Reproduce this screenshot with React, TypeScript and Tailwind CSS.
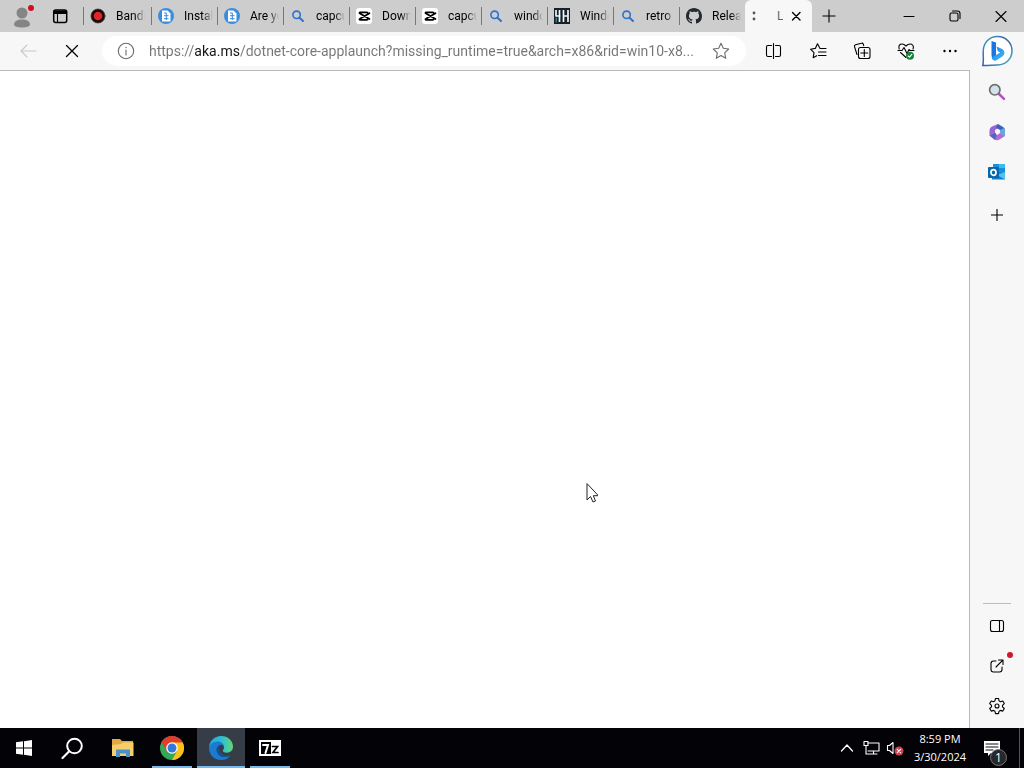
import type { ReactNode } from 'react';

type IconProps = { children: ReactNode; className?: string; box?: string };

function Icon({ children, className = 'size-4', box = '0 0 16 16' }: IconProps) {
  return (
    <svg viewBox={box} className={`shrink-0 ${className}`} fill="none" stroke="currentColor" strokeWidth="1.1" strokeLinecap="round" strokeLinejoin="round" aria-hidden="true">
      {children}
    </svg>
  );
}

const BandicamIcon = () => (
  <Icon>
    <circle cx="8" cy="8" r="7" fill="#160808" stroke="#4a3030" strokeWidth="0.8" />
    <circle cx="8" cy="8" r="4.3" fill="#e02428" stroke="none" />
  </Icon>
);

const DocIcon = () => (
  <Icon>
    <circle cx="8" cy="8" r="8" fill="#3a8ddd" stroke="none" />
    <path d="M4 2.500h5.500l3 3v8H4z" fill="#fff" stroke="none" />
    <path d="M6 5h2.500M6 7.700h4.500M6 10.700h4.500M8.300 5v7" stroke="#3a8ddd" strokeWidth="1" strokeLinecap="butt" />
  </Icon>
);

const SearchIcon = () => (
  <Icon>
    <circle cx="6.600" cy="6.800" r="3.700" stroke="#2a73cf" strokeWidth="1.600" />
    <path d="M9.500 9.700l3.500 3.300" stroke="#2a73cf" strokeWidth="2" />
  </Icon>
);

const CapcutIcon = () => (
  <Icon>
    <rect width="16" height="16" rx="3" fill="#fff" stroke="none" />
    <path d="M13.500 5.200L4 10.700c-1 .6-.6 1.100.2 1.100h6.600c.7 0 1-.3 1-.9v-.4M13.500 11L4 5.500c-1-.6-.6-1.100.2-1.100h6.600c.7 0 1 .3 1 .9v.4" stroke="#000" strokeWidth="1.700" />
  </Icon>
);

const FourHIcon = () => (
  <Icon>
    <rect width="16" height="16" fill="#14202b" stroke="none" />
    <path d="M2 2v6h4.500M5.500 2v12M9.500 2v12M14 2v12M9.500 8H14" stroke="#f3f5f7" strokeWidth="1.700" strokeLinecap="butt" />
    <path d="M2.200 10v4" stroke="#4da7b5" strokeWidth="1" />
  </Icon>
);

const GithubIcon = () => (
  <Icon>
    <path
      fill="#24292f"
      stroke="none"
      d="M8 0C3.580 0 0 3.580 0 8c0 3.540 2.290 6.530 5.470 7.590.4.070.55-.17.55-.38 0-.19-.010-.82-.010-1.490-2.010.37-2.530-.49-2.690-.94-.09-.23-.48-.94-.82-1.130-.28-.15-.68-.52-.010-.53.63-.010 1.080.58 1.230.82.72 1.210 1.870.87 2.330.66.070-.52.280-.87.510-1.070-1.780-.2-3.640-.89-3.640-3.950 0-.87.310-1.590.82-2.150-.08-.2-.36-1.020.08-2.120 0 0 .67-.21 2.200.82.640-.18 1.320-.27 2-.27s1.360.09 2 .27c1.530-1.040 2.200-.82 2.200-.82.44 1.100.16 1.920.08 2.120.51.560.82 1.270.82 2.150 0 3.070-1.870 3.750-3.650 3.950.29.25.54.73.54 1.480 0 1.070-.010 1.930-.010 2.200 0 .21.15.46.55.38A8.010 8.010 0 0 0 16 8c0-4.420-3.580-8-8-8z"
    />
  </Icon>
);

const tabs = [
  { label: 'Bandicam', icon: <BandicamIcon /> },
  { label: 'Install', icon: <DocIcon /> },
  { label: 'Are you', icon: <DocIcon /> },
  { label: 'capcut', icon: <SearchIcon /> },
  { label: 'Download', icon: <CapcutIcon /> },
  { label: 'capcut', icon: <CapcutIcon /> },
  { label: 'windows', icon: <SearchIcon /> },
  { label: 'Windows', icon: <FourHIcon /> },
  { label: 'retro', icon: <SearchIcon /> },
  { label: 'Releases', icon: <GithubIcon /> },
];

const fade = '[mask-image:linear-gradient(to_right,#000_65%,transparent)]';

function TitleBar() {
  return (
    <header className="flex h-8 shrink-0 bg-[#cdcdcd]">
      <div className="flex w-[83px] shrink-0 items-center pl-3">
        <button aria-label="Profile">
          <Icon className="h-6 w-6" box="0 0 24 24">
            <circle cx="10" cy="9" r="5.500" fill="#858585" stroke="none" />
            <path d="M2 20.500c0-3 3-5 8-5s8 2 8 5c0 2-3.500 3-8 3s-8-1-8-3z" fill="#858585" stroke="none" />
            <circle cx="19" cy="4" r="3" fill="#cf101e" stroke="none" />
          </Icon>
        </button>
        <button aria-label="Tab actions" className="ml-4">
          <Icon>
            <rect x="1.700" y="2" width="13" height="12.500" rx="2" strokeWidth="1.500" />
            <path d="M2 3h12.500v2.500H2z" fill="#000" />
            <path d="M5.500 5v9.500" />
          </Icon>
        </button>
      </div>
      <nav aria-label="Tabs" className="flex min-w-0">
        {tabs.map((tab, i) => (
          <button key={i} className="flex w-[66px] min-w-0 items-center first:w-[68px]">
            <span className="h-[18px] w-px shrink-0 bg-[#777777]" />
            <span className="ml-1.5 shrink-0">{tab.icon}</span>
            <span className={`ml-2.5 w-[29px] overflow-hidden text-left font-[Roboto,sans-serif] text-xs whitespace-nowrap ${fade}`}>{tab.label}</span>
          </button>
        ))}
        <div className="flex w-[67px] items-center rounded-t-md bg-[#f7f7f7] pl-1.5">
          <Icon className="h-4 w-2" box="0 0 8 16">
            <circle cx="3" cy="5" r="1.400" fill="#555" stroke="none" />
            <circle cx="3" cy="11" r="1.400" fill="#555" stroke="none" />
          </Icon>
          <span className="ml-[18px] w-1.5 overflow-hidden font-[Roboto,sans-serif] text-xs text-[#666666]">L</span>
          <button aria-label="Close tab" className="ml-[5px]">
            <Icon><path d="M4.500 4.500l7.500 7.500M12 4.500L4.500 12" strokeWidth="1.400" /></Icon>
          </button>
        </div>
      </nav>
      <button aria-label="New tab" className="ml-[9px]">
        <Icon><path d="M8 1.500v13M1.500 8h13" strokeLinecap="butt" /></Icon>
      </button>
      <div className="ml-auto flex">
        <button aria-label="Minimize" className="flex w-[46px] items-center justify-center"><Icon><path d="M3 8.500h10" /></Icon></button>
        <button aria-label="Restore" className="flex w-[46px] items-center justify-center">
          <Icon>
            <rect x="3" y="5" width="8" height="8" rx="1.500" />
            <path d="M5.500 3h5c1.700 0 2.500.8 2.500 2.500v5" />
          </Icon>
        </button>
        <button aria-label="Close" className="flex w-[46px] items-center justify-center"><Icon><path d="M3 3.500l10 10M13 3.500l-10 10" /></Icon></button>
      </div>
    </header>
  );
}

function BingIcon() {
  return (
    <svg viewBox="0 0 32 32" className="size-8" fill="none" aria-hidden="true">
      <defs>
        <linearGradient id="ring" x1="0" y1="0" x2="1" y2="1">
          <stop offset="0" stopColor="#4aa0bd" /><stop offset=".5" stopColor="#355ea8" /><stop offset="1" stopColor="#4fb8c4" />
        </linearGradient>
        <linearGradient id="bing" x1="0" y1="0" x2="1" y2="1">
          <stop offset="0" stopColor="#1683e6" /><stop offset=".5" stopColor="#2d9df0" /><stop offset="1" stopColor="#45c2e5" />
        </linearGradient>
      </defs>
      <path d="M1.800 30.500c.8-3 .6-7.500.4-12.500C1.800 8 8 1.500 16.500 1.500S31 8 31 15.800 25 30 16.500 30c-5 0-9 .7-14.700.5z" fill="#fff" stroke="url(#ring)" strokeWidth="1.500" />
      <path d="M10.500 6l4.500 1.500v13l-4 3-.5-3.500z" fill="#1b74df" />
      <path d="M15.500 11.500l4.500 2c4.500 2 4.300 6.300 1.300 8L15.500 25.300c-2 1.200-4.700-.5-4.700-2.800l8.500-5-2.500-1.200z" fill="url(#bing)" />
    </svg>
  );
}

function Toolbar() {
  return (
    <div className="flex h-[38px] shrink-0 items-center bg-[#f7f7f7]">
      <button aria-label="Back" className="ml-[18px] text-[#c9c9c9]">
        <Icon className="size-5" box="0 0 20 20"><path d="M18 10H3M9 4l-6 6 6 6" /></Icon>
      </button>
      <button aria-label="Stop loading" className="ml-6">
        <Icon className="size-5" box="0 0 20 20"><path d="M4.500 4.500l11 11M15.500 4.500l-11 11" strokeWidth="1.300" /></Icon>
      </button>
      <div className="ml-5 flex h-[30px] min-w-0 flex-1 items-center rounded-full bg-white">
        <button aria-label="Site information" className="ml-3.5 text-[#6b6b6b]">
          <Icon className="size-5" box="0 0 20 20"><circle cx="10" cy="10" r="7.700" /><path d="M10 9v5" /><circle cx="10" cy="6.500" r=".7" fill="currentColor" stroke="none" /></Icon>
        </button>
        <input
          aria-label="Address"
          readOnly
          value="https://aka.ms/dotnet-core-applaunch?missing_runtime=true&arch=x86&rid=win10-x8..."
          className="ml-[13px] min-w-0 flex-1 bg-[linear-gradient(to_right,#757575_46px,#151515_46px,#151515_91px,#757575_91px)] bg-clip-text font-[Roboto,sans-serif] text-sm text-ellipsis text-transparent outline-none"
        />
        <button aria-label="Add to favorites" className="mr-4 text-[#6b6b6b]">
          <Icon className="size-[18px]" box="0 0 18 18"><path d="M9 1.300l2.300 5 5.400.7-4 3.800 1 5.500L9 13.600l-4.700 2.700 1-5.500-4-3.800 5.400-.7z" /></Icon>
        </button>
      </div>
      <div className="ml-1.5 flex shrink-0">
        <button aria-label="Split screen" className="flex w-11 justify-center">
          <Icon className="size-[18px]" box="0 0 18 18"><path d="M6.500 3.500H3c-1 0-1.500.5-1.500 1.500v8c0 1 .5 1.500 1.500 1.500h3.500M10.500 3.500H14c1 0 1.500.5 1.500 1.500v8c0 1-.5 1.500-1.500 1.500h-3.500M8.500 1.500v15" /></Icon>
        </button>
        <button aria-label="Favorites" className="flex w-11 justify-center">
          <Icon className="size-[18px]" box="0 0 18 18"><path d="M17 6.500h-6L8.500 1.800 6.300 6.400l-4.800.8 3.500 3.500-.8 5 3.500-2M9.500 10h7.500M9.500 13.500h7.500" /></Icon>
        </button>
        <button aria-label="Collections" className="flex w-11 justify-center">
          <Icon className="size-[18px]" box="0 0 18 18"><path d="M4 12.500L1.500 4.700c-.3-1 .1-1.700 1-2l5.800-1.500c1-.3 1.700.1 2 1l.4 1.500" /><rect x="5.500" y="5.500" width="11.500" height="11" rx="2" /><path d="M11.300 7.500v7M7.800 11h7" /></Icon>
        </button>
        <button aria-label="Browser essentials" className="flex w-11 justify-center">
          <Icon className="size-[18px]" box="0 0 18 18"><path d="M2.200 7C1 3.500 3 2 5 2c2 0 3 1 4 2 1-1 2-2 4-2s4.500 1.700 3 5M3.500 10.500L9 15.500M1 8.500h4L7 5.500l3 6 2-4 1 1h4" /><circle cx="13" cy="13.800" r="4" fill="#16833b" stroke="none" /><path d="M11.200 14l1.300 1.200 2.300-2.800" stroke="#fff" /></Icon>
        </button>
        <button aria-label="More" className="flex w-11 justify-center">
          <Icon className="size-[18px]" box="0 0 18 18"><g fill="currentColor" stroke="none"><circle cx="3.500" cy="9" r="1.200" /><circle cx="9" cy="9" r="1.200" /><circle cx="14.500" cy="9" r="1.200" /></g></Icon>
        </button>
      </div>
      <button aria-label="Bing Chat" className="mr-[11px] ml-[9px]"><BingIcon /></button>
    </div>
  );
}

function Sidebar() {
  return (
    <aside className="flex w-[54px] shrink-0 flex-col items-center bg-[#f7f7f7] pt-[13px]">
      <button aria-label="Search">
        <Icon className="size-[18px]" box="0 0 18 18">
          <path d="M11 11l5 4.800" stroke="#b44fc4" strokeWidth="2.500" />
          <circle cx="6.800" cy="6.800" r="5.200" fill="#d4e1e8" stroke="#6e6e72" strokeWidth="1.700" />
        </Icon>
      </button>
      <button aria-label="Microsoft 365" className="mt-[22px]">
        <Icon className="size-[18px]" box="0 0 18 18">
          <path d="M10 1L4.500 3.200C2.500 4 1.500 5.500 1.500 7.500v5L7 9.500V7l5-3z" fill="#9568d5" stroke="none" />
          <path d="M10 1l5 3c1.500 1 2 2 2 4v5l-5-3V7L8 4.800z" fill="#3f61b9" stroke="none" />
          <path d="M1.500 12.500L7 9.500l1.800 2.800 3.200-2.300 5 3-5.500 3.500c-1.500 1-3.300 1-5 0z" fill="#b06bd7" stroke="none" />
          <path d="M1.500 12.500L7 9.500l1.800 2.800L7 16.900z" fill="#5963bf" stroke="none" />
          <path d="M12 7l4.500-2c.5 1 .5 2 .5 3v5l-5-3z" fill="#69a7e2" stroke="none" />
        </Icon>
      </button>
      <button aria-label="Outlook" className="mt-[22px]">
        <Icon className="size-[18px]" box="0 0 18 18">
          <path d="M5 1h12v9H5z" fill="#1590db" stroke="none" />
          <path d="M11 1h6v4h-6z" fill="#39bced" stroke="none" />
          <path d="M4 9l13 1v6.500H4z" fill="#147dc9" stroke="none" />
          <path d="M17 9v7.500L9 12z" fill="#50c6ee" stroke="none" />
          <rect y="4" width="11" height="11" rx="1" fill="#0966ad" stroke="none" />
          <ellipse cx="5.500" cy="9.500" rx="2.500" ry="2.900" stroke="#fff" strokeWidth="1.700" />
        </Icon>
      </button>
      <button aria-label="Customize" className="mt-[26px]"><Icon><path d="M8 2v12M2 8h12" strokeLinecap="butt" /></Icon></button>
      <hr className="mt-auto w-7 border-[#bdbdbd]" />
      <button aria-label="Hide sidebar" className="mt-[14px]">
        <Icon><rect x="1.500" y="2.500" width="13" height="11" rx="2" /><path d="M10.500 3v10" /></Icon>
      </button>
      <button aria-label="Open in new window" className="relative mt-6">
        <Icon><path d="M7 3H4.500C3 3 2 4 2 5.500v6C2 13 3 14 4.500 14h6c1.500 0 2.500-1 2.500-2.500V9M9.500 2H14v4.500M13.800 2.200L7 9" /></Icon>
        <span className="absolute -top-1.5 -right-2 size-1.5 rounded-full bg-[#d01627]" />
      </button>
      <button aria-label="Settings" className="mt-[23px] mb-[13px]">
        <Icon className="size-[18px]" box="0 0 18 18">
          <path d="M7.500 1.500h3l.6 2.400 1.300.8 2.400-.7 1.500 2.600-1.800 1.700v1.500l1.800 1.700-1.500 2.600-2.400-.7-1.300.8-.6 2.400h-3l-.6-2.400-1.300-.8-2.400.7-1.500-2.600 1.800-1.700V8.300L1.700 6.600 3.200 4l2.400.7 1.300-.8z" />
          <circle cx="9" cy="9" r="2" />
        </Icon>
      </button>
    </aside>
  );
}

function Taskbar() {
  return (
    <footer className="flex h-10 shrink-0 items-center bg-[#020207] text-white">
      <button aria-label="Start" className="flex h-10 w-12 items-center justify-center">
        <Icon><path d="M0 2.300l7-1v6.300H0zM8 1.200L16 0v7.600H8zM0 8.500h7v6.300l-7-1zM8 8.500h8V16l-8-1.200z" fill="#fff" stroke="none" /></Icon>
      </button>
      <button aria-label="Search" className="flex h-10 w-12 items-center justify-center">
        <Icon className="size-[23px]" box="0 0 23 23"><circle cx="13.500" cy="9" r="7.300" strokeWidth="2" /><path d="M8 14.500L1.500 21" strokeWidth="2.200" /></Icon>
      </button>
      <button aria-label="File Explorer" className="ml-[2px] flex h-10 w-[50px] items-center justify-center">
        <Icon className="h-5 w-[22px]" box="0 0 22 20"><path d="M0 1h8l2 2h11v15H0z" fill="#dfaa45" stroke="none" /><path d="M0 7l9-1 2-1.500h10.500V18H0z" fill="#f6cf6c" stroke="none" /><path d="M4 19v-7.500h14V19h-4v-3.500H8V19z" fill="#4a92c9" stroke="none" /></Icon>
      </button>
      <button aria-label="Google Chrome" className="ml-1 flex h-10 w-10 items-center justify-center border-b-2 border-[#76b9ed] pt-0.5">
        <Icon className="size-6" box="0 0 24 24">
          <circle cx="12" cy="12" r="12" fill="#35a853" stroke="none" />
          <path d="M1.600 6A12 12 0 0 1 22.400 6L22 8H12l-5.200 7z" fill="#e33b2e" stroke="none" />
          <path d="M12 6.500h10.700A12 12 0 0 1 12 24l5-9z" fill="#fbc116" stroke="none" />
          <circle cx="12" cy="12" r="5.800" fill="#fff" stroke="none" /><circle cx="12" cy="12" r="4.500" fill="#3478db" stroke="none" />
        </Icon>
      </button>
      <button aria-label="Microsoft Edge" className="ml-[5px] flex h-10 w-12 items-center justify-center border-b-2 border-[#76b9ed] bg-[#373d46] pt-0.5">
        <svg viewBox="0 0 24 24" className="size-6" aria-hidden="true">
          <defs><linearGradient id="edge"><stop stopColor="#22a6e1" /><stop offset=".6" stopColor="#35c1cc" /><stop offset="1" stopColor="#65d86b" /></linearGradient></defs>
          <path d="M0 12C0 5 5.500 0 12 0c7 0 12 5 12 10.500 0 4-2.800 6.200-6 6.200-2.500 0-4.200-1-4.200-2 0-.7 1.200-1.200 1.200-3.200C15 8.500 12 7 9 7 4 7 0 9.500 0 12z" fill="url(#edge)" />
          <path d="M0 12c0-3.500 4-6.500 9-6.500 3.500 0 6 2.700 6 5-1-1.500-2.300-2-3.700-1.500C8 10 7 13 8 16c1.200 3.500 4.500 5.300 8 5 2-.1 4-.8 5.500-1.800C19.500 22.500 16 24 12 24 5 24 0 18.500 0 12z" fill="#1b7bd0" />
          <path d="M11 9.200C8 10 7 13 8 16c1.200 3.500 4.500 5.300 8 5 2-.1 4-.8 5.500-1.800-3.500 1-9 .1-10.900-3.500-1.300-2.500-1-5 .4-6.500z" fill="#11549b" />
        </svg>
      </button>
      <button aria-label="7-Zip" className="ml-[5px] flex h-10 w-10 items-center justify-center border-b-2 border-[#76b9ed] pt-0.5">
        <Icon className="h-4 w-[22px]" box="0 0 22 16"><path d="M0 0h22v16H0z" fill="#fff" stroke="none" /><path d="M2 2h10v12H2z" fill="#000" stroke="none" /><path d="M4 5h5L6.500 13" stroke="#fff" strokeWidth="2" strokeLinejoin="miter" /><path d="M13.500 6.500h5L14 12.500h5" stroke="#000" strokeWidth="1.700" strokeLinejoin="miter" /></Icon>
      </button>
      <div className="ml-auto flex items-center">
        <button aria-label="Show hidden icons"><Icon><path d="M2.500 11L8 5l5.500 6" strokeWidth="1.300" /></Icon></button>
        <button aria-label="Network" className="ml-2"><Icon className="h-4 w-[17px]" box="0 0 17 16"><path d="M5 3h11v8H5M10.500 11v3M6 14h8M3 6v8h3" /><rect x="1" y="1.500" width="4" height="4" /></Icon></button>
        <button aria-label="Volume muted" className="ml-1.5"><Icon className="h-4 w-[18px]" box="0 0 18 16"><path d="M1.500 5.500h2L7 2.500v11l-3.500-3h-2z" /><circle cx="13" cy="11" r="4.500" fill="#cf4150" stroke="none" /><path d="M11.300 9.300l3.400 3.400M14.700 9.300l-3.400 3.400" stroke="#fff" /></Icon></button>
        <button className="ml-2 w-14 text-center text-[11px] leading-[18px] whitespace-nowrap"><span className="block">8:59 PM</span><span className="block">3/30/2024</span></button>
        <button aria-label="Notifications" className="relative mr-2 ml-[15px] h-7 w-7">
          <Icon className="size-[18px]" box="0 0 18 18"><path d="M1 2h16v12H8l-3 3v-3H1z" fill="#fff" stroke="none" /><path d="M3 5h12M3 8h12M3 11h7" stroke="#111" /></Icon>
          <span className="absolute right-1 -bottom-1 flex size-[17px] items-center justify-center rounded-full border border-[#777777] bg-[#26282c] text-xs leading-none">1</span>
        </button>
        <span className="h-10 w-px bg-[#555555]" /><span className="w-1" />
      </div>
    </footer>
  );
}

export default function App() {
  return (
    <div className="flex h-screen flex-col overflow-hidden bg-white font-['Open_Sans','Noto_Sans',sans-serif] text-black">
      <TitleBar />
      <Toolbar />
      <div className="flex min-h-0 flex-1">
        <main className="relative min-w-0 flex-1 border-t border-r border-[#b9b9b9] bg-white">
          <Icon className="absolute top-[412px] left-[586px] h-5 w-3" box="0 0 12 20"><path d="M1 1v16l3.500-3.500L7 19l2.500-1-2.200-5.300H12z" fill="#fff" stroke="#222" strokeWidth="1" strokeLinejoin="miter" /></Icon>
        </main>
        <Sidebar />
      </div>
      <Taskbar />
    </div>
  );
}
